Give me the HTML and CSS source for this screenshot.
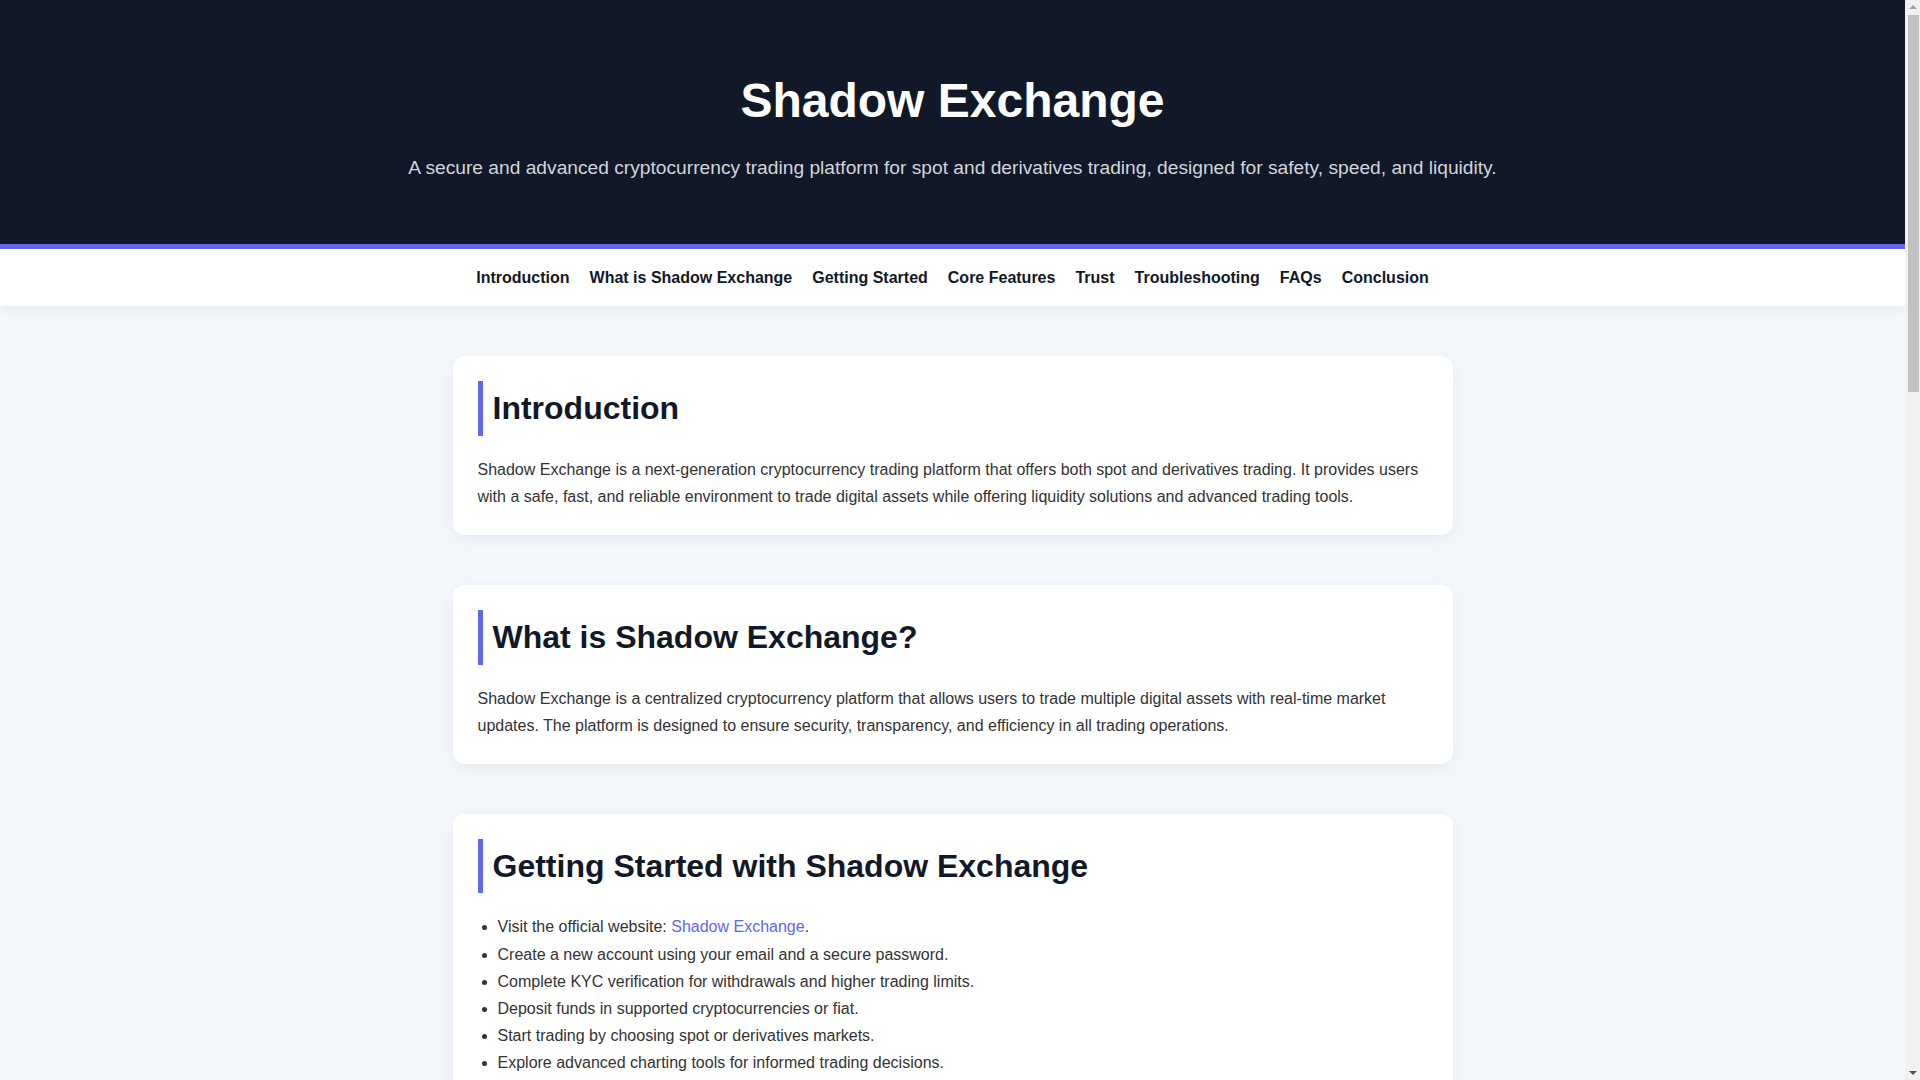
FILE: index.html
```html
<!DOCTYPE html>
<html lang="en">
<head>
<meta charset="utf-8">
<title>Shadow Exchange</title>
<link rel="stylesheet" href="styles.css">
</head>
<body>
<div class="page">
<header class="hero">
  <h1 class="hero-title">Shadow Exchange</h1>
  <p class="hero-sub">A secure and advanced cryptocurrency trading platform for spot and derivatives trading, designed for safety, speed, and liquidity.</p>
</header>
<nav class="topnav">
  <a href="#intro">Introduction</a>
  <a href="#what">What is Shadow Exchange</a>
  <a href="#start">Getting Started</a>
  <a href="#features">Core Features</a>
  <a href="#trust">Trust</a>
  <a href="#trouble">Troubleshooting</a>
  <a href="#faqs">FAQs</a>
  <a href="#conclusion">Conclusion</a>
</nav>
<main class="content">
  <section class="card" id="intro">
    <h2 class="card-title">Introduction</h2>
    <p class="card-text">Shadow Exchange is a next-generation cryptocurrency trading platform that offers both spot and derivatives trading. It provides users with a safe, fast, and reliable environment to trade digital assets while offering liquidity solutions and advanced trading tools.</p>
  </section>
  <section class="card" id="what">
    <h2 class="card-title">What is Shadow Exchange?</h2>
    <p class="card-text">Shadow Exchange is a centralized cryptocurrency platform that allows users to trade multiple digital assets with real-time market updates. The platform is designed to ensure security, transparency, and efficiency in all trading operations.</p>
  </section>
  <section class="card" id="start">
    <h2 class="card-title">Getting Started with Shadow Exchange</h2>
    <ul class="card-list">
      <li>Visit the official website: <a class="link" href="#">Shadow Exchange</a>.</li>
      <li>Create a new account using your email and a secure password.</li>
      <li>Complete KYC verification for withdrawals and higher trading limits.</li>
      <li>Deposit funds in supported cryptocurrencies or fiat.</li>
      <li>Start trading by choosing spot or derivatives markets.</li>
      <li>Explore advanced charting tools for informed trading decisions.</li>
    </ul>
  </section>
  <section class="card" id="features">
    <h2 class="card-title">Core Features</h2>
    <ul class="card-list">
      <li>Spot and derivatives trading with deep liquidity.</li>
      <li>Advanced order types and real-time charting.</li>
      <li>Multi-layer security with cold wallet storage.</li>
      <li>Fast deposits and withdrawals.</li>
    </ul>
  </section>
  <section class="card" id="trust">
    <h2 class="card-title">Trust</h2>
    <p class="card-text">Shadow Exchange focuses on transparency, robust security practices, and responsive support to build long-term trust with its users.</p>
  </section>
  <section class="card" id="trouble">
    <h2 class="card-title">Troubleshooting</h2>
    <p class="card-text">If you face login or transaction issues, clear your browser cache, verify your network connection, and contact customer support.</p>
  </section>
  <section class="card" id="faqs">
    <h2 class="card-title">FAQs</h2>
    <p class="card-text">Is Shadow Exchange secure? Yes, it uses industry-standard encryption and two-factor authentication.</p>
  </section>
  <section class="card" id="conclusion">
    <h2 class="card-title">Conclusion</h2>
    <p class="card-text">Shadow Exchange offers a secure, fast, and feature-rich environment for both new and experienced traders.</p>
  </section>
</main>
</div>
<div class="fake-scrollbar" aria-hidden="true">
  <span class="sb-arrow sb-up"></span>
  <span class="sb-thumb"></span>
  <span class="sb-arrow sb-down"></span>
</div>
</body>
</html>
```
FILE: styles.css
```css
html, body {
  margin: 0;
  padding: 0;
}
body {
  font-family: "Liberation Sans", Arial, sans-serif;
  font-size: 16px;
  line-height: 1.7;
  color: #333333;
  background: #f3f6fa;
}
.page {
  margin-right: 15px;
}
.hero {
  background: #111827;
  color: #ffffff;
  text-align: center;
  padding: 60px 20px;
}
.hero-title {
  font-size: 48px;
  font-weight: 700;
  margin: 0 0 10px;
  line-height: 1.7;
}
.hero-sub {
  font-size: 19.2px;
  margin: 0;
  color: #d1d5db;
}
.topnav {
  background: #ffffff;
  border-top: 5px solid #6366f1;
  padding: 15px 20px;
  display: flex;
  justify-content: center;
  gap: 20px;
  box-shadow: 0 2px 10px rgba(0, 0, 0, 0.07);
  position: relative;
}
.topnav a {
  color: #111827;
  font-weight: 700;
  text-decoration: none;
}
.content {
  padding: 50px 20px 10px;
}
.card {
  max-width: 1000px;
  box-sizing: border-box;
  margin: 0 auto 50px;
  background: #ffffff;
  border-radius: 12px;
  padding: 25px;
  box-shadow: 0 4px 15px rgba(0, 0, 0, 0.05);
}
.card-title {
  font-size: 32px;
  font-weight: 700;
  color: #111827;
  margin: 0 0 20px;
  border-left: 5px solid #6366f1;
  padding-left: 10px;
}
.card-text {
  margin: 0;
}
.card-list {
  margin: 0;
  padding-left: 20px;
}
.link {
  color: #6366f1;
  text-decoration: none;
}
.fake-scrollbar {
  position: fixed;
  top: 0;
  right: 0;
  width: 15px;
  height: 100vh;
  background: #f1f1f1;
  display: flex;
  flex-direction: column;
  align-items: center;
}
.sb-arrow {
  width: 0;
  height: 0;
  border-left: 4px solid transparent;
  border-right: 4px solid transparent;
}
.sb-up {
  margin-top: 5px;
  border-bottom: 4px solid #a3a3a3;
}
.sb-down {
  margin-top: auto;
  margin-bottom: 5px;
  border-top: 4px solid #505050;
}
.sb-thumb {
  margin-top: 6px;
  width: 11px;
  height: 377px;
  background: #c1c1c1;
  margin-left: 2px;
}
```
